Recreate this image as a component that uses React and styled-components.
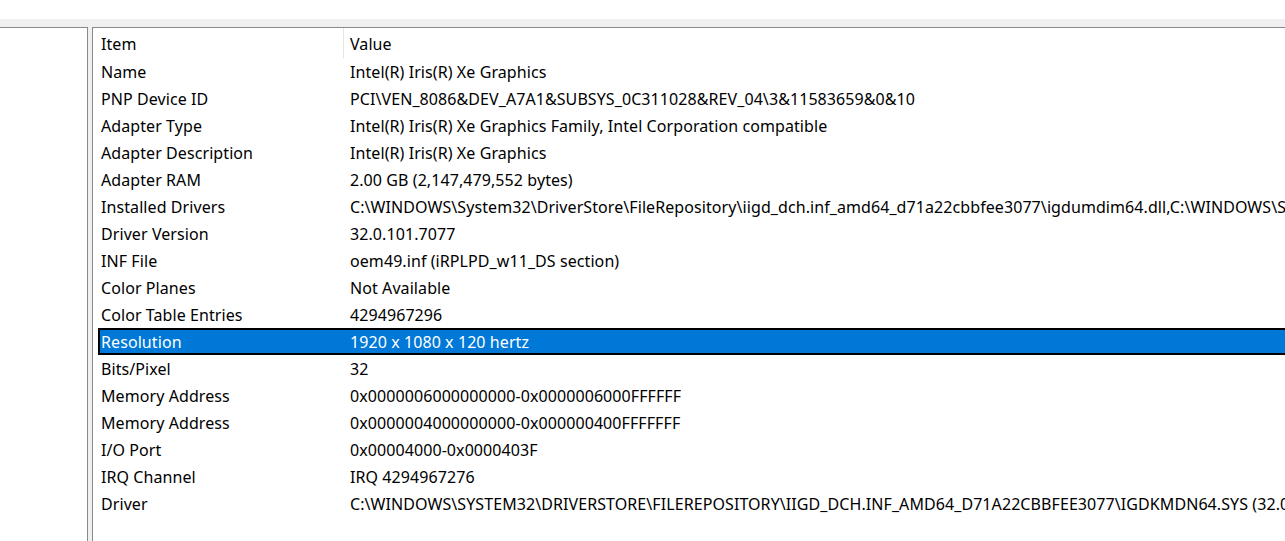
import React from "react";
import styled, { createGlobalStyle } from "styled-components";

const GlobalStyle = createGlobalStyle`
  html, body {
    margin: 0;
    padding: 0;
    background: #ffffff;
    overflow: hidden;
  }
  body {
    font-family: "Noto Sans", "Open Sans", sans-serif;
  }
`;

const Window = styled.div`
  width: 1285px;
  height: 541px;
  display: flex;
  flex-direction: column;
  background: #ffffff;
  overflow: hidden;
`;

const TopSpace = styled.div`
  height: 19px;
  flex: none;
  background: #ffffff;
`;

const Body = styled.div`
  flex: 1;
  display: flex;
  gap: 4px;
  padding-top: 8px;
  background: #f0f0f0;
  min-height: 0;
`;

const TreePane = styled.div`
  width: 88px;
  flex: none;
  box-sizing: border-box;
  background: #ffffff;
  border-top: 1px solid #8a8a8a;
  border-right: 1px solid #8a8a8a;
`;

const ListPane = styled.div`
  flex: 1;
  min-width: 0;
  background: #ffffff;
  border-top: 1px solid #8a8a8a;
  border-left: 1px solid #8a8a8a;
  overflow: hidden;
  font-size: 16px;
  letter-spacing: 0.08px;
  color: #000000;
`;

const Header = styled.div`
  display: flex;
  height: 30px;
  align-items: stretch;
`;

const HeaderCell = styled.div`
  display: flex;
  align-items: center;
  box-sizing: border-box;
  width: ${(p) => (p.width ? `${p.width}px` : "auto")};
  flex: ${(p) => (p.width ? "none" : "1")};
  padding-left: ${(p) => p.pad}px;
  padding-top: 2px;
  border-right: ${(p) => (p.divider ? "1px solid #e5e5e5" : "none")};
  white-space: nowrap;
`;

const Rows = styled.div`
  display: flex;
  flex-direction: column;
  padding-left: 5px;
`;

const Row = styled.div`
  display: grid;
  grid-template-columns: 249px 1fr;
  height: 27px;
  box-sizing: border-box;
  align-items: center;
  padding-left: 1px;
  border: 2px solid ${(p) => (p.selected ? "#000000" : "transparent")};
  background: ${(p) => (p.selected ? "#0078d7" : "transparent")};
  color: ${(p) => (p.selected ? "#ffffff" : "#000000")};
  white-space: nowrap;
  margin-right: -2000px;
`;

const Cell = styled.span`
  overflow: hidden;
  white-space: nowrap;
`;

const items = [
  ["Name", "Intel(R) Iris(R) Xe Graphics"],
  ["PNP Device ID", "PCI\\VEN_8086&DEV_A7A1&SUBSYS_0C311028&REV_04\\3&11583659&0&10"],
  ["Adapter Type", "Intel(R) Iris(R) Xe Graphics Family, Intel Corporation compatible"],
  ["Adapter Description", "Intel(R) Iris(R) Xe Graphics"],
  ["Adapter RAM", "2.00 GB (2,147,479,552 bytes)"],
  [
    "Installed Drivers",
    "C:\\WINDOWS\\System32\\DriverStore\\FileRepository\\iigd_dch.inf_amd64_d71a22cbbfee3077\\igdumdim64.dll,C:\\WINDOWS\\System32\\DriverStore\\FileRepository\\iigd_dch.inf_amd64_d71a22cbbfee3077\\igd10iumd64.dll",
  ],
  ["Driver Version", "32.0.101.7077"],
  ["INF File", "oem49.inf (iRPLPD_w11_DS section)"],
  ["Color Planes", "Not Available"],
  ["Color Table Entries", "4294967296"],
  ["Resolution", "1920 x 1080 x 120 hertz"],
  ["Bits/Pixel", "32"],
  ["Memory Address", "0x0000006000000000-0x0000006000FFFFFF"],
  ["Memory Address", "0x0000004000000000-0x000000400FFFFFFF"],
  ["I/O Port", "0x00004000-0x0000403F"],
  ["IRQ Channel", "IRQ 4294967276"],
  [
    "Driver",
    "C:\\WINDOWS\\SYSTEM32\\DRIVERSTORE\\FILEREPOSITORY\\IIGD_DCH.INF_AMD64_D71A22CBBFEE3077\\IGDKMDN64.SYS (32.0.101.7077, 64.00 MB (67,108,864 bytes), 9/12/2025 8:00 PM)",
  ],
];

const App = () => {
  return (
    <Window>
      <GlobalStyle />
      <TopSpace />
      <Body>
        <TreePane />
        <ListPane>
          <Header>
            <HeaderCell width={251} pad={8} divider>
              Item
            </HeaderCell>
            <HeaderCell pad={6}>Value</HeaderCell>
          </Header>
          <Rows>
            {items.map(([item, value], i) => (
              <Row key={i} selected={item === "Resolution"}>
                <Cell>{item}</Cell>
                <Cell>{value}</Cell>
              </Row>
            ))}
          </Rows>
        </ListPane>
      </Body>
    </Window>
  );
};

export default App;
